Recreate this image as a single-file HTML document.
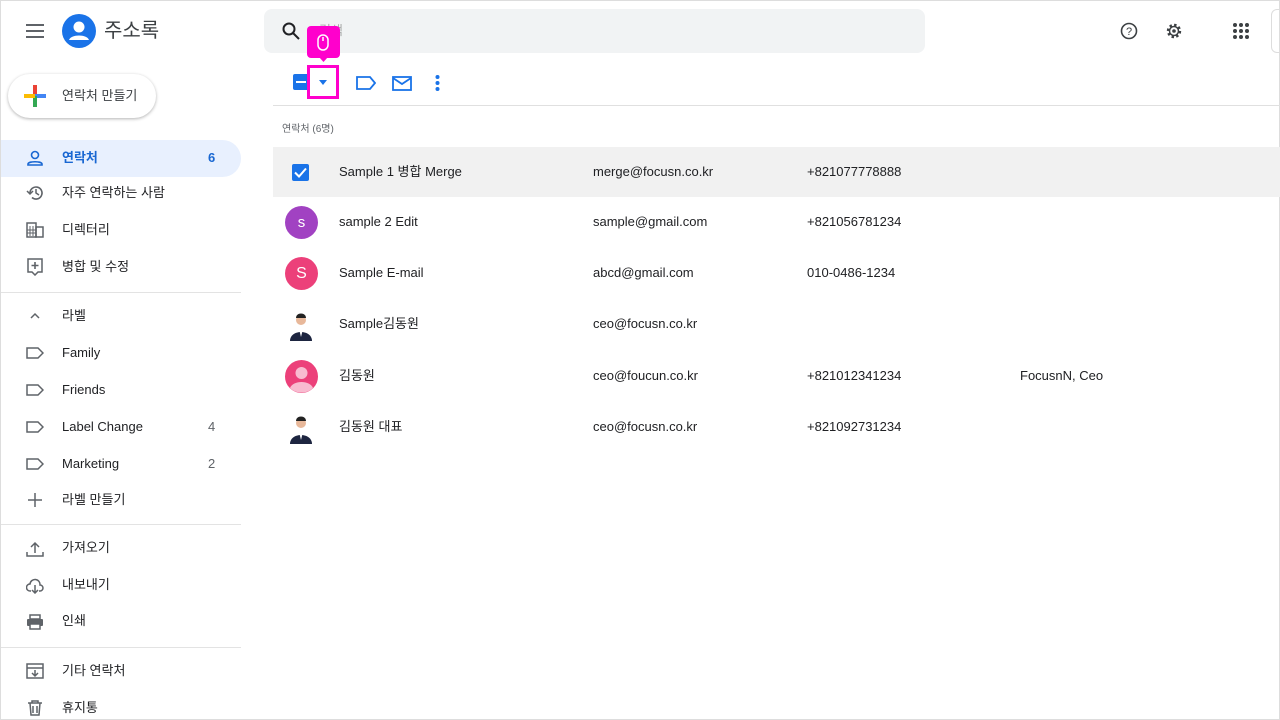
<!DOCTYPE html>
<html><head><meta charset="utf-8"><style>
*{margin:0;padding:0;box-sizing:border-box}
body{width:1280px;height:720px;overflow:hidden;background:#fff;font-family:"Liberation Sans","Noto Sans CJK KR",sans-serif;color:#202124;position:relative;border:1px solid #ddd}
.a{position:absolute}
.t{font-size:13px;line-height:16px;height:16px;position:absolute;white-space:nowrap}
.side .t{left:61px}
.ic{position:absolute;left:25px}
.hr{position:absolute;left:0;width:240px;height:1px;background:#e3e3e3}
</style></head><body>
<!-- header -->
<svg class="a" style="left:24px;top:22px" width="20" height="16"><path d="M1 2h18M1 8h18M1 14h18" stroke="#5f6368" stroke-width="2"/></svg>
<svg class="a" style="left:61px;top:13px" width="34" height="34"><circle cx="17" cy="17" r="17" fill="#1a73e8"/><circle cx="17" cy="13" r="5.5" fill="#fff"/><path d="M7 26c2-6 18-6 20 0z" fill="#fff"/></svg>
<div class="t" style="left:103px;top:18px;font-size:20px;line-height:24px;height:24px;color:#3c4043">주소록</div>
<div class="a" style="left:263px;top:8px;width:661px;height:44px;background:#f1f3f4;border-radius:8px"></div>
<svg class="a" style="left:280px;top:20px" width="20" height="20"><circle cx="8" cy="8" r="5.5" fill="none" stroke="#202124" stroke-width="2"/><path d="M12 12l6 6" stroke="#202124" stroke-width="2"/></svg>
<div class="t" style="left:318px;top:22px;color:#aaa">검색</div>
<svg class="a" style="left:1119px;top:21px" width="18" height="18"><circle cx="9" cy="9" r="7.5" fill="none" stroke="#3c4043" stroke-width="1.6"/><text x="9" y="13" font-size="11" text-anchor="middle" fill="#3c4043" font-family="Liberation Sans">?</text></svg>
<svg class="a" style="left:1164px;top:21px" width="18" height="18"><circle cx="9" cy="9" r="6" fill="none" stroke="#3c4043" stroke-width="2.4" stroke-dasharray="2.4 2.3"/><circle cx="9" cy="9" r="4.5" fill="none" stroke="#3c4043" stroke-width="1.5"/><circle cx="9" cy="9" r="1.8" fill="#3c4043"/></svg>
<svg class="a" style="left:1232px;top:22px" width="18" height="18"><g fill="#3c4043"><circle cx="2" cy="2" r="2"/><circle cx="8" cy="2" r="2"/><circle cx="14" cy="2" r="2"/><circle cx="2" cy="8" r="2"/><circle cx="8" cy="8" r="2"/><circle cx="14" cy="8" r="2"/><circle cx="2" cy="14" r="2"/><circle cx="8" cy="14" r="2"/><circle cx="14" cy="14" r="2"/></g></svg>
<div class="a" style="left:1270px;top:8px;width:20px;height:44px;border:1px solid #ddd;border-radius:6px"></div>
<!-- create button -->
<div class="a" style="left:7px;top:73px;width:148px;height:44px;border-radius:22px;box-shadow:0 1px 3px rgba(0,0,0,.3);background:#fff"></div>
<svg class="a" style="left:23px;top:84px" width="22" height="22"><rect x="9" y="0" width="4" height="11" fill="#ea4335"/><rect x="11" y="9" width="11" height="4" fill="#4285f4"/><rect x="9" y="11" width="4" height="11" fill="#34a853"/><rect x="0" y="9" width="11" height="4" fill="#fbbc04"/></svg>
<div class="t" style="left:61px;top:87px;color:#3c4043">연락처 만들기</div>
<!-- sidebar -->
<div class="side">
<div class="a" style="left:0;top:139px;width:240px;height:37px;background:#e8f0fe;border-radius:0 19px 19px 0"></div>
<svg class="ic" style="top:148px" width="18" height="18"><circle cx="9" cy="6" r="3.5" fill="none" stroke="#1967d2" stroke-width="1.6"/><path d="M2 16v-1c0-3 14-3 14 0v1z" fill="none" stroke="#1967d2" stroke-width="1.6"/></svg>
<div class="t" style="top:149px;color:#1967d2;font-weight:bold">연락처</div>
<div class="t" style="left:207px!important;top:149px;color:#1967d2;font-weight:bold">6</div>
<svg class="ic" style="top:183px" width="18" height="18"><path d="M4 9a6 6 0 1 1 2 4.5" fill="none" stroke="#5f6368" stroke-width="1.6"/><path d="M1 7l3 3 3-3" fill="none" stroke="#5f6368" stroke-width="1.5"/><path d="M10 5v4l3 2" fill="none" stroke="#5f6368" stroke-width="1.5"/></svg>
<div class="t" style="top:184px">자주 연락하는 사람</div>
<svg class="ic" style="top:221px" width="18" height="16"><rect x="1" y="1" width="9" height="14" fill="none" stroke="#5f6368" stroke-width="1.5"/><rect x="10" y="5" width="7" height="10" fill="none" stroke="#5f6368" stroke-width="1.5"/><path d="M4 4v10M7 4v10M1 8h9M1 11h9" stroke="#5f6368"/></svg>
<div class="t" style="top:221px">디렉터리</div>
<svg class="ic" style="top:257px" width="18" height="18"><path d="M2 1h14v13h-4l-3 3-3-3H2z" fill="none" stroke="#5f6368" stroke-width="1.5"/><path d="M9 4v7M5.5 7.5h7" stroke="#5f6368" stroke-width="1.6"/></svg>
<div class="t" style="top:258px">병합 및 수정</div>
<div class="hr" style="top:291px"></div>
<svg class="ic" style="top:311px;left:29px" width="10" height="8"><path d="M1 6l4-4 4 4" fill="none" stroke="#5f6368" stroke-width="1.5"/></svg>
<div class="t" style="top:307px">라벨</div>
<svg class="ic" style="top:346px" width="18" height="12"><path d="M1 1h11l5 5-5 5H1z" fill="none" stroke="#5f6368" stroke-width="1.5"/></svg>
<div class="t" style="top:344px">Family</div>
<svg class="ic" style="top:383px" width="18" height="12"><path d="M1 1h11l5 5-5 5H1z" fill="none" stroke="#5f6368" stroke-width="1.5"/></svg>
<div class="t" style="top:381px">Friends</div>
<svg class="ic" style="top:420px" width="18" height="12"><path d="M1 1h11l5 5-5 5H1z" fill="none" stroke="#5f6368" stroke-width="1.5"/></svg>
<div class="t" style="top:418px">Label Change</div>
<div class="t" style="left:207px!important;top:418px;color:#5f6368">4</div>
<svg class="ic" style="top:457px" width="18" height="12"><path d="M1 1h11l5 5-5 5H1z" fill="none" stroke="#5f6368" stroke-width="1.5"/></svg>
<div class="t" style="top:455px">Marketing</div>
<div class="t" style="left:207px!important;top:455px;color:#5f6368">2</div>
<svg class="ic" style="top:492px;left:27px" width="14" height="14"><path d="M7 0v14M0 7h14" stroke="#5f6368" stroke-width="1.5"/></svg>
<div class="t" style="top:491px">라벨 만들기</div>
<div class="hr" style="top:523px"></div>
<svg class="ic" style="top:540px" width="18" height="16"><path d="M9 12V2M5 6l4-4 4 4M1 11v4h16v-4" fill="none" stroke="#5f6368" stroke-width="1.5"/></svg>
<div class="t" style="top:539px">가져오기</div>
<svg class="ic" style="top:577px" width="18" height="16"><path d="M5 13H4a3.5 3.5 0 0 1 0-7 5 5 0 0 1 10 1 3 3 0 0 1 0 6h-1" fill="none" stroke="#5f6368" stroke-width="1.5"/><path d="M9 7v8M6 12l3 3 3-3" fill="none" stroke="#5f6368" stroke-width="1.5"/></svg>
<div class="t" style="top:576px">내보내기</div>
<svg class="ic" style="top:613px" width="18" height="16"><rect x="1" y="5" width="16" height="7" rx="1" fill="#5f6368"/><rect x="4" y="1" width="10" height="4" fill="none" stroke="#5f6368" stroke-width="1.5"/><rect x="4" y="10" width="10" height="5" fill="#fff" stroke="#5f6368" stroke-width="1.5"/></svg>
<div class="t" style="top:612px">인쇄</div>
<div class="hr" style="top:646px"></div>
<svg class="ic" style="top:662px" width="18" height="16"><rect x="1" y="1" width="16" height="14" fill="none" stroke="#5f6368" stroke-width="1.5"/><path d="M1 5h16M9 7v6M6 10l3 3 3-3" fill="none" stroke="#5f6368" stroke-width="1.5"/></svg>
<div class="t" style="top:662px">기타 연락처</div>
<svg class="ic" style="top:699px;left:27px" width="14" height="16"><path d="M0 3h14M4 3V1h6v2M2 3l1 12h8l1-12M5 6v7M9 6v7" fill="none" stroke="#5f6368" stroke-width="1.5"/></svg>
<div class="t" style="top:699px">휴지통</div>
</div>
<!-- toolbar -->
<div class="a" style="left:292px;top:73px;width:16px;height:16px;background:#1a73e8;border-radius:2px"></div>
<div class="a" style="left:295px;top:80px;width:10px;height:2px;background:#fff"></div>
<div class="a" style="left:306px;top:64px;width:32px;height:34px;border:3px solid #ff00cc;background:#fff"></div>
<svg class="a" style="left:318px;top:79px" width="8" height="5"><path d="M0 0h8L4 5z" fill="#1a73e8"/></svg>
<div class="a" style="left:306px;top:25px;width:33px;height:32px;background:#ff00cc;border-radius:4px"></div>
<svg class="a" style="left:318px;top:56px" width="9" height="6"><path d="M0 0h9L4.5 5z" fill="#ff00cc"/></svg>
<svg class="a" style="left:316px;top:33px" width="12" height="17"><rect x="1" y="1" width="10" height="15" rx="5" fill="none" stroke="#fff" stroke-width="1.5"/><path d="M6 3v4" stroke="#fff" stroke-width="1.5"/></svg>
<svg class="a" style="left:355px;top:75px" width="20" height="14"><path d="M1 1h13l5 6-5 6H1z" fill="none" stroke="#1a73e8" stroke-width="1.8"/></svg>
<svg class="a" style="left:391px;top:75px" width="20" height="15"><rect x="1" y="1" width="18" height="13" fill="none" stroke="#1a73e8" stroke-width="1.8"/><path d="M1 2l9 6 9-6" fill="none" stroke="#1a73e8" stroke-width="1.8"/></svg>
<svg class="a" style="left:434px;top:74px" width="5" height="16"><g fill="#1a73e8"><circle cx="2.5" cy="2" r="2"/><circle cx="2.5" cy="8" r="2"/><circle cx="2.5" cy="14" r="2"/></g></svg>
<div class="a" style="left:272px;top:104px;width:1008px;height:1px;background:#e0e0e0"></div>
<div class="t" style="left:281px;top:121px;font-size:10px;color:#5f6368">연락처 (6명)</div>
<!-- rows -->
<div class="a" style="left:272px;top:146px;width:1008px;height:50px;background:#f1f1f1"></div>
<div class="a" style="left:291px;top:163px;width:17px;height:17px;background:#1a73e8;border-radius:2px"></div>
<svg class="a" style="left:293px;top:166px" width="13" height="11"><path d="M1 5.5l4 4 7-8" fill="none" stroke="#fff" stroke-width="2"/></svg>
<div class="a" style="left:284px;top:205px;width:33px;height:33px;border-radius:50%;background:#a142c2;color:#fff;font-size:15px;text-align:center;line-height:33px">s</div>
<div class="a" style="left:284px;top:256px;width:33px;height:33px;border-radius:50%;background:#ec407a;color:#fff;font-size:16px;text-align:center;line-height:33px">S</div>
<svg class="a" style="left:284px;top:307px" width="33" height="33"><circle cx="16" cy="12" r="5" fill="#e8b89a"/><path d="M11 10c0-6 10-6 10 0z" fill="#222"/><path d="M5 33c0-12 22-12 22 0z" fill="#1d2540"/><path d="M14 21l2 8 2-8z" fill="#fff"/></svg>
<svg class="a" style="left:284px;top:359px" width="33" height="33"><circle cx="16.5" cy="16.5" r="16.5" fill="#ec407a"/><circle cx="16.5" cy="13" r="6" fill="#f8bbd0"/><path d="M5 28c3-8 20-8 23 0a16.5 16.5 0 0 1-23 0z" fill="#f8bbd0"/></svg>
<svg class="a" style="left:284px;top:410px" width="33" height="33"><circle cx="16" cy="12" r="5" fill="#e8b89a"/><path d="M11 10c0-6 10-6 10 0z" fill="#222"/><path d="M5 33c0-12 22-12 22 0z" fill="#1d2540"/><path d="M14 21l2 8 2-8z" fill="#fff"/></svg>
<div class="t" style="left:338px;top:163px">Sample 1 병합 Merge</div>
<div class="t" style="left:592px;top:163px">merge@focusn.co.kr</div>
<div class="t" style="left:806px;top:163px">+821077778888</div>
<div class="t" style="left:338px;top:213px">sample 2 Edit</div>
<div class="t" style="left:592px;top:213px">sample@gmail.com</div>
<div class="t" style="left:806px;top:213px">+821056781234</div>
<div class="t" style="left:338px;top:264px">Sample E-mail</div>
<div class="t" style="left:592px;top:264px">abcd@gmail.com</div>
<div class="t" style="left:806px;top:264px">010-0486-1234</div>
<div class="t" style="left:338px;top:315px">Sample김동원</div>
<div class="t" style="left:592px;top:315px">ceo@focusn.co.kr</div>
<div class="t" style="left:338px;top:367px">김동원</div>
<div class="t" style="left:592px;top:367px">ceo@foucun.co.kr</div>
<div class="t" style="left:806px;top:367px">+821012341234</div>
<div class="t" style="left:1019px;top:367px">FocusnN, Ceo</div>
<div class="t" style="left:338px;top:418px">김동원 대표</div>
<div class="t" style="left:592px;top:418px">ceo@focusn.co.kr</div>
<div class="t" style="left:806px;top:418px">+821092731234</div>
</body></html>
